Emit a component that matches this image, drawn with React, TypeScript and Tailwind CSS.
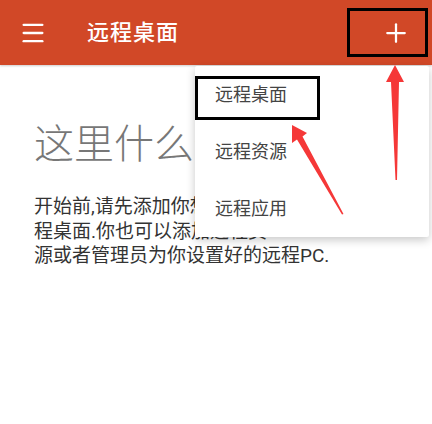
import { Menu, Plus } from "lucide-react";

const FONT = "font-['Roboto','Noto_Sans_CJK_SC',sans-serif]";

const MENU_ITEMS = ["远程桌面", "远程资源", "远程应用"];

// 截图上的红色箭头和黑框标注
function Annotations() {
  return (
    <svg className="pointer-events-none absolute inset-0" width={432} height={424} viewBox="0 0 432 424">
      <rect x={196.5} y={77.5} width={122} height={41} fill="none" stroke="#000" strokeWidth={3} />
      <rect x={348.5} y={9.5} width={78} height={46} fill="none" stroke="#000" strokeWidth={3} />
      {/* 竖直箭头 */}
      <polygon points="395,65 404,82 399,82 397,180 395.5,180 391,82 386,82" fill="#F53838" />
      {/* 斜箭头 */}
      <polygon points="292,125 307,133 302.5,136.5 343.5,214 342,214.5 297,139.5 292,143" fill="#F53838" />
    </svg>
  );
}

export default function App() {
  return (
    <div className={`relative h-[424px] w-[432px] overflow-hidden bg-white ${FONT}`}>
      <header className="flex h-[65px] items-center bg-[#D14827] shadow-[0_1px_2px_rgba(0,0,0,0.2)]">
        <Menu size={28} strokeWidth={2} className="ml-[19px] text-white" />
        <h1 className="ml-[40px] text-[22px] font-medium leading-none tracking-[1px] text-white">远程桌面</h1>
        <button className="ml-auto mr-[13px] flex h-[46px] w-[46px] items-center justify-center text-white">
          <Plus size={30} strokeWidth={1.8} />
        </button>
      </header>

      <main className="px-[34px] pt-[56px]">
        <h2 className="text-[40px] font-light leading-[48px] text-[#777]">这里什么也没有</h2>
        <div className="mt-[26px] text-[19px] leading-[24.5px] text-[#333]">
          <p>开始前,请先添加你想要连接的远</p>
          <p>程桌面.你也可以添加远程资</p>
          <p>源或者管理员为你设置好的远程PC.</p>
        </div>
      </main>

      <div className="absolute left-[195px] top-[66px] w-[234px] rounded-[2px] bg-white shadow-[0_3px_10px_rgba(0,0,0,0.22)]">
        {MENU_ITEMS.map((item) => (
          <div key={item} className="flex h-[57px] items-center pl-[20px] text-[18px] text-[#444]">
            {item}
          </div>
        ))}
      </div>

      <Annotations />
    </div>
  );
}
